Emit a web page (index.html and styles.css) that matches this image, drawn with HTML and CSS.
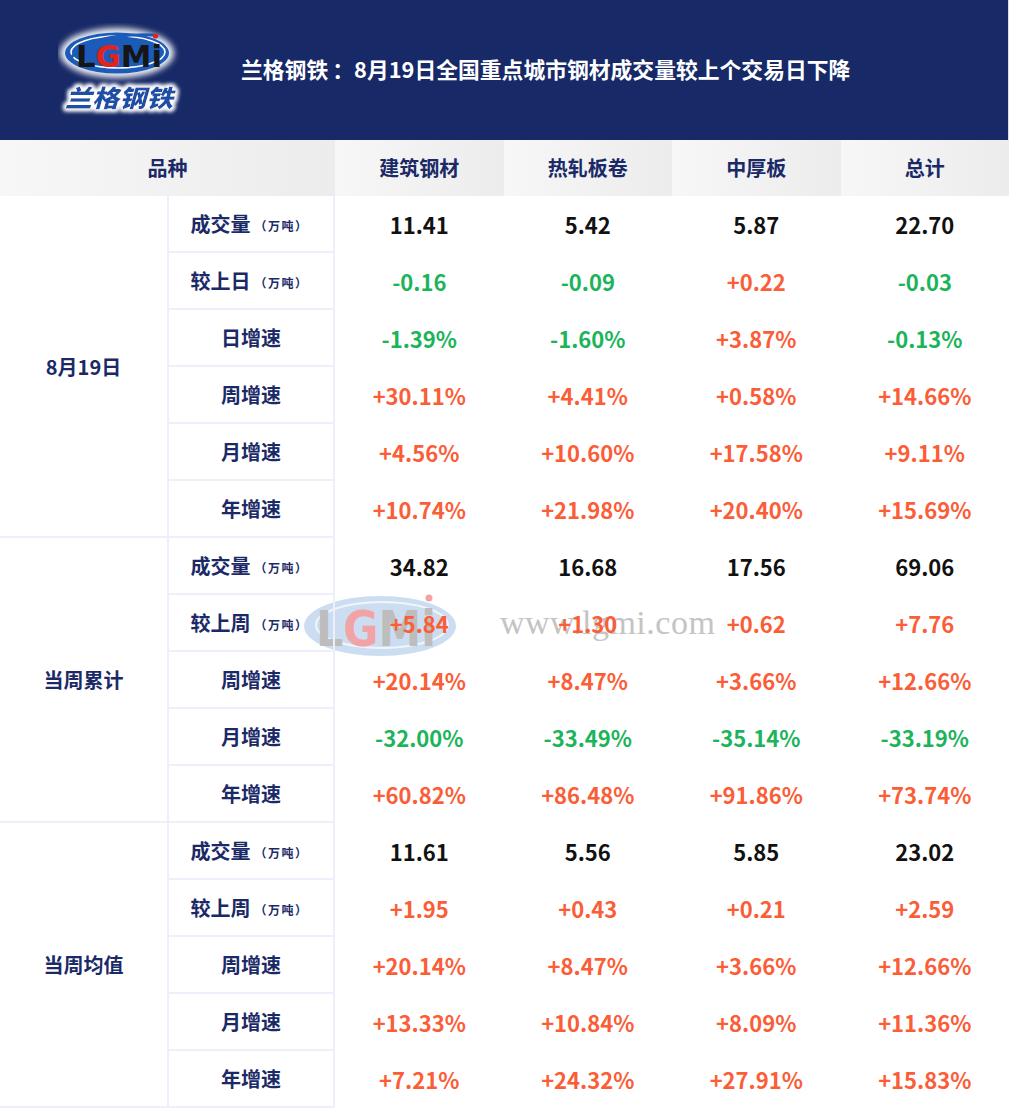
FILE: index.html
```html
<!DOCTYPE html>
<html lang="zh-CN">
<head>
<meta charset="utf-8">
<title>兰格钢铁</title>
<link rel="stylesheet" href="styles.css">
</head>
<body>
<div class="page">
  <header class="banner">
    <svg class="logo" width="125" height="95" viewBox="0 0 125 95" xmlns="http://www.w3.org/2000/svg">
      <defs>
        <filter id="glow" x="-30%" y="-30%" width="160%" height="160%">
          <feGaussianBlur stdDeviation="3"/>
        </filter>
        <filter id="tglow" x="-20%" y="-40%" width="140%" height="180%">
          <feMorphology operator="dilate" radius="1.5" in="SourceAlpha" result="d"/>
          <feGaussianBlur in="d" stdDeviation="2" result="b"/>
          <feFlood flood-color="#ffffff"/>
          <feComposite in2="b" operator="in" result="w"/>
          <feMerge><feMergeNode in="w"/><feMergeNode in="w"/><feMergeNode in="SourceGraphic"/></feMerge>
        </filter>
      </defs>
      <ellipse cx="59" cy="30" rx="57" ry="25" fill="#ffffff" filter="url(#glow)" opacity="0.95"/>
      <ellipse cx="59" cy="30" rx="52" ry="20.5" fill="#1c5cb8"/>
      <ellipse cx="60" cy="29" rx="47" ry="16" fill="none" stroke="#ffffff" stroke-width="1.6"/>
      <path d="M12 36 Q30 10 96 12" fill="none" stroke="#1c5cb8" stroke-width="3"/>
      <text x="18" y="44" class="lg" textLength="86" lengthAdjust="spacingAndGlyphs"><tspan fill="#161616">L</tspan><tspan fill="#e3211d">G</tspan><tspan fill="#161616">Mi</tspan></text>
      <circle cx="97.5" cy="13" r="2.6" fill="#e3211d"/>
      <text x="7" y="84" class="lgcn" filter="url(#tglow)" textLength="108" lengthAdjust="spacingAndGlyphs">兰格钢铁</text>
    </svg>
    <h1 class="title">兰格钢铁<span class="colon">：</span>8月19日全国重点城市钢材成交量较上个交易日下降</h1>
  </header>

  <div class="table-wrap">
    <div class="watermark" aria-hidden="true">
      <svg class="wm-logo" width="156" height="66" viewBox="0 0 156 66" xmlns="http://www.w3.org/2000/svg">
        <ellipse cx="78" cy="35" rx="76" ry="30" fill="#c6d9ef" opacity="0.9"/>
        <ellipse cx="80" cy="34" rx="66" ry="23" fill="none" stroke="#ffffff" stroke-width="2" opacity="0.7"/>
        <text x="14" y="55" class="wm-lg" textLength="120" lengthAdjust="spacingAndGlyphs"><tspan fill="#bdbdbd">L</tspan><tspan fill="#f2a3a6">G</tspan><tspan fill="#bdbdbd">Mi</tspan></text>
        <circle cx="127" cy="7" r="3.5" fill="#f2a3a6"/>
      </svg>
      <span class="wm-url">www.lgmi.com</span>
    </div>

    <div class="grid">
      <div class="hcell span2">品种</div>
      <div class="hcell">建筑钢材</div>
      <div class="hcell">热轧板卷</div>
      <div class="hcell">中厚板</div>
      <div class="hcell">总计</div>

      <div class="group g6">8月19日</div>
      <div class="label">成交量<small>（万吨）</small></div>
      <div class="v k">11.41</div><div class="v k">5.42</div><div class="v k">5.87</div><div class="v k">22.70</div>
      <div class="label">较上日<small>（万吨）</small></div>
      <div class="v g">-0.16</div><div class="v g">-0.09</div><div class="v r">+0.22</div><div class="v g">-0.03</div>
      <div class="label">日增速</div>
      <div class="v g">-1.39%</div><div class="v g">-1.60%</div><div class="v r">+3.87%</div><div class="v g">-0.13%</div>
      <div class="label">周增速</div>
      <div class="v r">+30.11%</div><div class="v r">+4.41%</div><div class="v r">+0.58%</div><div class="v r">+14.66%</div>
      <div class="label">月增速</div>
      <div class="v r">+4.56%</div><div class="v r">+10.60%</div><div class="v r">+17.58%</div><div class="v r">+9.11%</div>
      <div class="label">年增速</div>
      <div class="v r">+10.74%</div><div class="v r">+21.98%</div><div class="v r">+20.40%</div><div class="v r">+15.69%</div>

      <div class="group g5">当周累计</div>
      <div class="label">成交量<small>（万吨）</small></div>
      <div class="v k">34.82</div><div class="v k">16.68</div><div class="v k">17.56</div><div class="v k">69.06</div>
      <div class="label">较上周<small>（万吨）</small></div>
      <div class="v r">+5.84</div><div class="v r">+1.30</div><div class="v r">+0.62</div><div class="v r">+7.76</div>
      <div class="label">周增速</div>
      <div class="v r">+20.14%</div><div class="v r">+8.47%</div><div class="v r">+3.66%</div><div class="v r">+12.66%</div>
      <div class="label">月增速</div>
      <div class="v g">-32.00%</div><div class="v g">-33.49%</div><div class="v g">-35.14%</div><div class="v g">-33.19%</div>
      <div class="label">年增速</div>
      <div class="v r">+60.82%</div><div class="v r">+86.48%</div><div class="v r">+91.86%</div><div class="v r">+73.74%</div>

      <div class="group g5">当周均值</div>
      <div class="label">成交量<small>（万吨）</small></div>
      <div class="v k">11.61</div><div class="v k">5.56</div><div class="v k">5.85</div><div class="v k">23.02</div>
      <div class="label">较上周<small>（万吨）</small></div>
      <div class="v r">+1.95</div><div class="v r">+0.43</div><div class="v r">+0.21</div><div class="v r">+2.59</div>
      <div class="label">周增速</div>
      <div class="v r">+20.14%</div><div class="v r">+8.47%</div><div class="v r">+3.66%</div><div class="v r">+12.66%</div>
      <div class="label">月增速</div>
      <div class="v r">+13.33%</div><div class="v r">+10.84%</div><div class="v r">+8.09%</div><div class="v r">+11.36%</div>
      <div class="label">年增速</div>
      <div class="v r">+7.21%</div><div class="v r">+24.32%</div><div class="v r">+27.91%</div><div class="v r">+15.83%</div>
    </div>
  </div>
</div>
</body>
</html>
```

FILE: styles.css
```css
* { box-sizing: border-box; }
html, body {
  margin: 0;
  padding: 0;
  background: #ffffff;
}
body {
  font-family: "Noto Sans CJK SC", "Noto Sans", sans-serif;
}
.page {
  width: 1009px;
}
.banner {
  height: 140px;
  background: #172966;
  display: flex;
  align-items: center;
  padding-left: 58px;
  border-right: 1px solid #d8dbe4;
}
.logo {
  display: block;
  flex: none;
}
.lg {
  font-family: "DejaVu Sans", sans-serif;
  font-weight: bold;
  font-size: 31px;
}
.lgcn {
  font-family: "Noto Sans CJK SC", sans-serif;
  font-weight: 900;
  font-size: 24px;
  fill: #1d4fa8;
  font-style: italic;
}
.title {
  margin: 0 0 0 58px;
  color: #ffffff;
  font-size: 21.8px;
  font-weight: 700;
  line-height: 1;
  letter-spacing: 0;
  padding-bottom: 2px;
  white-space: nowrap;
}
.colon {
  padding-left: 4px;
}
.table-wrap {
  position: relative;
}
.watermark {
  position: absolute;
  left: 302px;
  top: 451px;
  z-index: 0;
  display: flex;
  align-items: center;
  gap: 42px;
}
.wm-logo { display: block; }
.wm-lg {
  font-family: "DejaVu Sans", sans-serif;
  font-weight: bold;
  font-size: 50px;
}
.wm-url {
  font-family: "Liberation Serif", serif;
  font-size: 34px;
  color: #c4c4c4;
  letter-spacing: 0.5px;
  margin-top: -2px;
}
.grid {
  position: relative;
  z-index: 1;
  display: grid;
  grid-template-columns: 167px 168px repeat(4, 1fr);
  grid-template-rows: 56px;
  grid-auto-rows: 57px;
}
.hcell {
  background: linear-gradient(90deg, #f7f7f7, #ececec);
  color: #1b2a67;
  font-weight: 700;
  font-size: 20px;
  display: flex;
  align-items: center;
  justify-content: center;
  padding-bottom: 2px;
}
.span2 { grid-column: span 2; }
.group {
  grid-column: 1;
  color: #1b2a67;
  font-weight: 700;
  font-size: 20px;
  display: flex;
  align-items: center;
  justify-content: center;
  border-bottom: 2px solid #edf0fb;
}
.g6 { grid-row: span 6; }
.g5 { grid-row: span 5; }
.label {
  grid-column: 2;
  color: #1b2a67;
  font-weight: 700;
  font-size: 20px;
  display: flex;
  align-items: center;
  justify-content: center;
  border-left: 2px solid #edf0fb;
  border-right: 2px solid #edf0fb;
  border-bottom: 2px solid #edf0fb;
  white-space: nowrap;
}
.label small {
  font-size: 12px;
  font-weight: 700;
  margin-top: 3px;
  padding: 0 3px 0 4px;
  letter-spacing: 1.5px;
}
.v {
  display: flex;
  align-items: center;
  justify-content: center;
  font-weight: 700;
  font-size: 22px;
  padding-bottom: 2px;
}
.k { color: #111111; }
.g { color: #1cb45a; }
.r { color: #fb5d37; }
```
